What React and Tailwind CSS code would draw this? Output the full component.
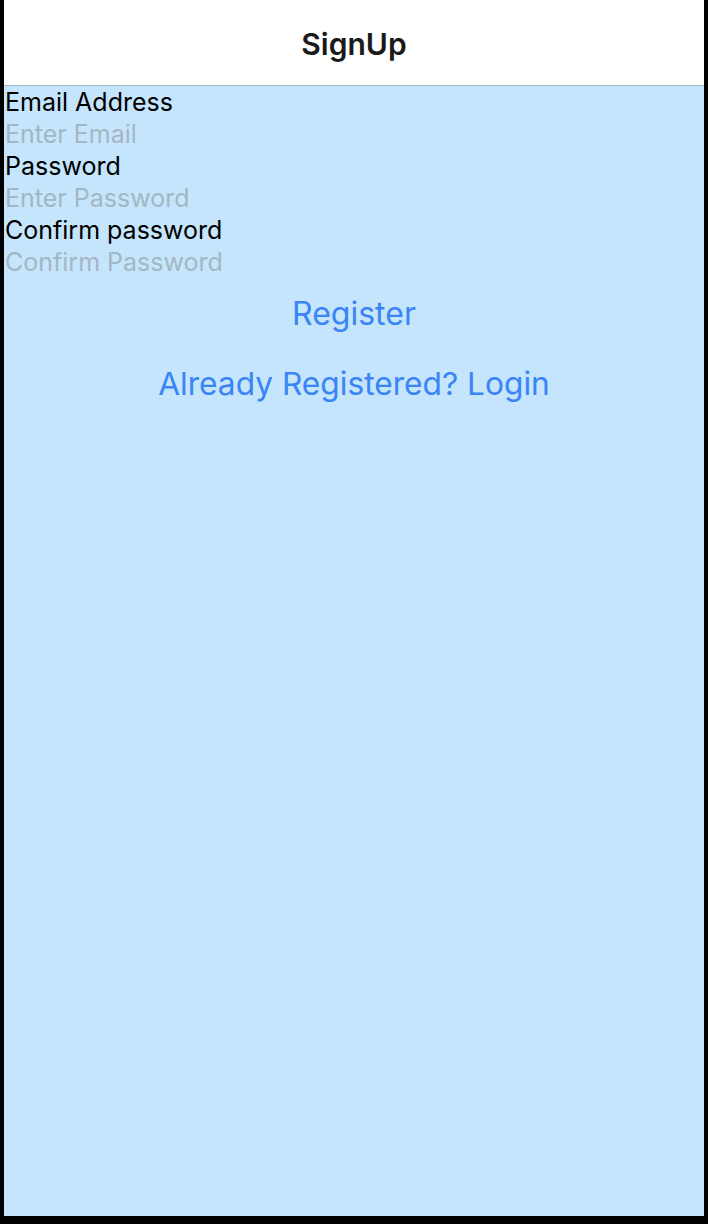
export default function App() {
  return (
    <div className="flex h-[1224px] w-[708px] bg-black pl-1 pr-1 pb-2">
      <div className="flex flex-1 flex-col bg-[#c4e5fb] font-['Inter',sans-serif]">
        <header className="flex h-[86px] items-center justify-center border-b border-[#a3b3bf] bg-white pt-[3px]">
          <h1 className="text-[30px] font-semibold text-[#1a1a1a]">SignUp</h1>
        </header>
        <form className="flex flex-col">
          <label className="pl-[1px] text-[25px] leading-[32px] text-black">Email Address</label>
          <input
            placeholder="Enter Email"
            className="bg-transparent pl-[1px] text-[25px] leading-[32px] outline-none placeholder:text-[#a5b6c3]"
          />
          <label className="pl-[1px] text-[25px] leading-[32px] text-black">Password</label>
          <input
            type="password"
            placeholder="Enter Password"
            className="bg-transparent pl-[1px] text-[25px] leading-[32px] outline-none placeholder:text-[#a5b6c3]"
          />
          <label className="pl-[1px] text-[25px] leading-[32px] text-black">Confirm password</label>
          <input
            type="password"
            placeholder="Confirm Password"
            className="bg-transparent pl-[1px] text-[25px] leading-[32px] outline-none placeholder:text-[#a5b6c3]"
          />
          <button type="button" className="mt-[16px] text-[32px] leading-[40px] text-[#3a84f5]">
            Register
          </button>
          <button type="button" className="mt-[30px] text-[31.7px] leading-[40px] text-[#3a84f5]">
            Already Registered? Login
          </button>
        </form>
      </div>
    </div>
  )
}
